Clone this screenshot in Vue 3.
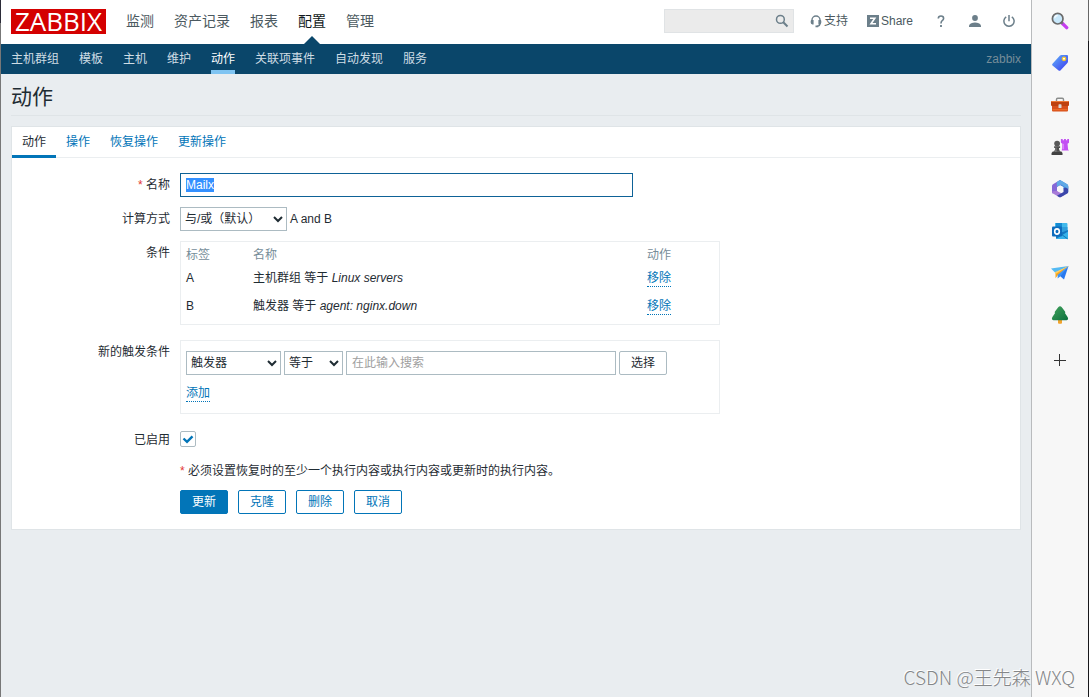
<script setup>
import { onMounted, ref } from 'vue'

const mainNav = ['监测', '资产记录', '报表', '配置', '管理']
const subNav = ['主机群组', '模板', '主机', '维护', '动作', '关联项事件', '自动发现', '服务']
const tabs = ['动作', '操作', '恢复操作', '更新操作']
const conditions = [
  { label: 'A', text: '主机群组 等于', value: 'Linux servers' },
  { label: 'B', text: '触发器 等于', value: 'agent: nginx.down' }
]
const name = ref('Mailx')
const enabled = ref(true)
const nameInput = ref(null)

onMounted(() => {
  nameInput.value.focus()
  nameInput.value.select()
})
</script>

<template>
  <div class="window">
    <div class="edge edge-left"></div>
    <div class="page">
      <header class="top">
        <a href="#" class="logo">ZABBIX</a>
        <nav class="main-nav">
          <a v-for="item in mainNav" :key="item" href="#" :class="{ active: item === '配置' }">{{ item }}</a>
        </nav>
        <div class="search">
          <input type="text" aria-label="搜索" />
          <button type="button" aria-label="搜索">
            <svg width="14" height="14" viewBox="0 0 14 14" fill="none" stroke="#6c7f8a">
              <circle cx="5.4" cy="5.4" r="3.9" stroke-width="1.5" />
              <path d="M8.3 8.3L12.5 12.5" stroke-width="2" />
            </svg>
          </button>
        </div>
        <a href="#" class="tool support">
          <svg width="12" height="14" viewBox="0 0 12 14">
            <path d="M2 8.5V6a4 4 0 0 1 8 0v3.6Q10 12 7 12.4" fill="none" stroke="#6c7f8a" stroke-width="1.4" />
            <path d="M1 6h2.600v4.600H2.400Q.6 10 .6 8zM11 6H8.400v4.600h1.200Q11.400 10 11.400 8zM5.500 11.500h2.700v1.800H5.500z" fill="#6c7f8a" />
          </svg>
          支持
        </a>
        <a href="#" class="tool share">
          <svg width="12" height="12" viewBox="0 0 12 12">
            <rect width="12" height="12" fill="#6c7f8a" />
            <path d="M3 3.200h4.800L4 8.800h5" fill="none" stroke="#fff" stroke-width="1.600" />
          </svg>
          Share
        </a>
        <a href="#" class="tool help" aria-label="帮助">
          <svg width="8" height="12" viewBox="0 0 8 12">
            <path d="M1.3 3.5Q1.4 1 4 1t2.6 2.4Q6.6 4.7 5.2 5.7 4 6.6 4 8.4" fill="none" stroke="#6c7f8a" stroke-width="1.6" />
            <rect x="3.1" y="10" width="1.8" height="2" fill="#6c7f8a" />
          </svg>
        </a>
        <a href="#" class="tool user" aria-label="用户">
          <svg width="12" height="12" viewBox="0 0 12 12" fill="#6c7f8a">
            <circle cx="6" cy="3" r="2.9" />
            <path d="M0 12v-1.6Q1.6 7.6 6 7.6t6 2.8V12z" />
          </svg>
        </a>
        <a href="#" class="tool power" aria-label="退出">
          <svg width="12" height="12" viewBox="0 0 12 12" fill="none" stroke="#6c7f8a" stroke-width="1.5">
            <path d="M3.2 1.9a5.1 5.1 0 1 0 5.6 0M6 0v6.2" />
          </svg>
        </a>
      </header>

      <nav class="sub-nav">
        <a v-for="item in subNav" :key="item" href="#" :class="{ active: item === '动作' }">{{ item }}</a>
        <span class="server">zabbix</span>
      </nav>

      <main>
        <h1>动作</h1>
        <form class="card" @submit.prevent>
          <div class="tabs" role="tablist">
            <a v-for="tab in tabs" :key="tab" href="#" role="tab" :class="{ active: tab === '动作' }">{{ tab }}</a>
          </div>
          <div class="fields">
            <label for="name"><i class="star">*</i> 名称</label>
            <div><input id="name" ref="nameInput" v-model="name" type="text" class="name" /></div>

            <label for="calc">计算方式</label>
            <div class="line">
              <select id="calc" class="calc"><option>与/或（默认）</option></select>
              <span>A and B</span>
            </div>

            <div class="label">条件</div>
            <div class="box table-box">
              <table>
                <thead>
                  <tr><th class="c-label">标签</th><th>名称</th><th class="c-action">动作</th></tr>
                </thead>
                <tbody>
                  <tr v-for="c in conditions" :key="c.label">
                    <td>{{ c.label }}</td>
                    <td>{{ c.text }} <em>{{ c.value }}</em></td>
                    <td><a href="#" class="dotted">移除</a></td>
                  </tr>
                </tbody>
              </table>
            </div>

            <label for="cond-type" class="new-label">新的触发条件</label>
            <div class="box new-box">
              <div class="line">
                <select id="cond-type" class="cond-type"><option>触发器</option></select>
                <select class="cond-op" aria-label="运算符"><option>等于</option></select>
                <input type="text" class="pattern" placeholder="在此输入搜索" aria-label="触发器" />
                <button type="button" class="btn grey">选择</button>
              </div>
              <a href="#" class="dotted">添加</a>
            </div>

            <label for="enabled" class="enabled-label">已启用</label>
            <div class="enabled">
              <input id="enabled" v-model="enabled" type="checkbox" />
              <svg v-if="enabled" class="tick" width="16" height="16" viewBox="0 0 16 16" fill="none" stroke="#0275b8" stroke-width="2.4">
                <path d="M3.500 7.500L7 10.800 12.500 5.300" />
              </svg>
            </div>

            <div class="footer">
              <p><i class="star">*</i> 必须设置恢复时的至少一个执行内容或执行内容或更新时的执行内容。</p>
              <div class="buttons">
                <button type="submit" class="btn primary">更新</button>
                <button type="button" class="btn">克隆</button>
                <button type="button" class="btn">删除</button>
                <button type="button" class="btn">取消</button>
              </div>
            </div>
          </div>
        </form>
      </main>
    </div>

    <aside class="sidebar">
      <button type="button" aria-label="Search">
        <svg width="18" height="18" viewBox="0 0 18 18">
          <path d="M11 11l4.7 4.6" stroke="#c53df0" stroke-width="3.4" stroke-linecap="round" />
          <path d="M9.8 9.8l2 2" stroke="#777" stroke-width="2" />
          <circle cx="6.7" cy="6.7" r="5.3" fill="#c8e8fb" stroke="#6b6b6b" stroke-width="1.7" />
          <path d="M3.7 6.3a3 3 0 0 1 3-2.8" fill="none" stroke="#f3fbff" stroke-width="1.3" />
        </svg>
      </button>
      <button type="button" aria-label="Shopping">
        <svg width="18" height="18" viewBox="0 0 18 18">
          <defs><linearGradient id="tag" x1="0" y1="0" x2="1" y2="1"><stop stop-color="#61b5fa" /><stop offset="1" stop-color="#3b36ee" /></linearGradient></defs>
          <path d="M9 1.5Q9.6 1 10.4 1H16q1 0 1 1v5.6q0 .8-.6 1.4l-7 7.4q-.9.9-1.8 0L1.500 11.600q-.9-.9 0-1.800z" fill="url(#tag)" />
          <circle cx="13" cy="4.8" r="1.7" fill="#fff" stroke="#f4c62d" stroke-width="1.3" />
        </svg>
      </button>
      <button type="button" aria-label="Tools">
        <svg width="18" height="18" viewBox="0 0 18 18">
          <path d="M5.500 6V3.500q0-1.200 1.200-1.200h4.600q1.200 0 1.200 1.200V6" fill="none" stroke="#8b8d8c" stroke-width="1.400" />
          <path d="M1 8h16v6.500q0 1-1 1H2q-1 0-1-1z" fill="#d8501b" />
          <path d="M1 5h16q1 0 1 1v3q0 1-1 1H1q-1 0-1-1V6q0-1 1-1z" fill="#be410e" />
          <path d="M1 5h16q.8 0 1 1H0q.2-1 1-1z" fill="#f07a35" />
          <path d="M1.500 13h15v1.300h-15z" fill="#ed6c28" />
          <rect x="7.500" y="8.300" width="3" height="3.800" rx=".6" fill="#d9dad7" />
        </svg>
      </button>
      <button type="button" aria-label="Games">
        <svg width="18" height="18" viewBox="0 0 20 18">
          <path d="M11 0h2v1.600h1.400V0h2.200v1.600H18V0h2v4.200l-1.600 1.300.6 6.200 1 1.300h-8l.7-7.500L11 4.200z" fill="#c350f3" />
          <path d="M12.500 5.500h2v6h-2z" fill="#db85fa" />
          <circle cx="6.800" cy="5.200" r="3.200" fill="#595959" />
          <path d="M3.500 8.200h6.600v1.800H8.800q0 2.500 1.700 4.300H3q1.700-1.800 1.700-4.300H3.500z" fill="#4e4e4e" />
          <path d="M2 14h9.500l1.300 1.700V18H.6v-2.300z" fill="#424242" />
          <path d="M5 9.500h1.300v5H4q1-2 1-5z" fill="#777" />
        </svg>
      </button>
      <button type="button" aria-label="Microsoft 365">
        <svg width="18" height="18" viewBox="0 0 18 18">
          <path d="M9 0l7.200 4.300q1 .7 1 1.800v6L12.500 9V7L7.300 4.200z" fill="#3e87dd" />
          <path d="M9 0L2 4.300Q1 5 1 6.100v5.800q0 1 .8 1.500L6 11V7.300L11.500 4z" fill="#8668d6" />
          <path d="M1 11.500q0 1.400 1 2L8 17q1 .6 2 0l3.400-2L6 10.700z" fill="#a77bd8" />
          <path d="M17.200 6.500v5.400q0 1-.9 1.600L10 17q-1 .6-2 0l-2-1.200 6.500-3.900V8.500z" fill="#3b47aa" />
          <path d="M9 0l7.200 4.300q1 .7 1 1.800v3L10 4.500 5.800 7.100V1.900z" fill="#60a9e5" />
          <path d="M9 5.600l3 1.700v3.500L9 12.600l-3-1.800V7.300z" fill="#f7f7f7" />
        </svg>
      </button>
      <button type="button" aria-label="Outlook">
        <svg width="18" height="18" viewBox="0 0 18 18">
          <path d="M4 1h11.500q1 0 1 1v8H4z" fill="#42b9eb" />
          <path d="M5 1h6v5H5z" fill="#168bd2" />
          <path d="M11 5h5.500v5H11z" fill="#2f9fdc" />
          <path d="M5 10h7l5-2v8q0 1-1 1H6q-1 0-1-1z" fill="#1478c0" />
          <path d="M5 17l12-7.500V16q0 1-1 1z" fill="#35b2ea" />
          <path d="M11 12.800l5.500 4" stroke="#1275b4" stroke-width="1" />
          <rect x="1" y="4.500" width="10" height="10" rx="1" fill="#0d6cbd" />
          <ellipse cx="6" cy="9.500" rx="2.300" ry="2.600" fill="none" stroke="#fff" stroke-width="1.600" />
        </svg>
      </button>
      <button type="button" aria-label="Drop">
        <svg width="18" height="18" viewBox="0 0 18 18">
          <path d="M0 4.500L17.500 2 4.500 9z" fill="#54baf3" />
          <path d="M17.500 2L13 15.500 8.400 11.500z" fill="#2878ef" />
          <path d="M17.500 2L4.500 8.800v5.500l2.300-3z" fill="#f8a71d" />
          <path d="M17.500 2L6.700 10.800v3.700l2.600-2.300z" fill="#3d91f4" />
          <path d="M17.500 2L3.800 8.300l.8 1.600z" fill="#ffd067" />
        </svg>
      </button>
      <button type="button" aria-label="Tree">
        <svg width="18" height="18" viewBox="0 0 18 18">
          <defs><linearGradient id="leaf" x1="0" y1="0" x2="1" y2="1"><stop stop-color="#43a25c" /><stop offset="1" stop-color="#0c703e" /></linearGradient></defs>
          <path d="M7 12h4v4.700q0 1-1 1H8q-1 0-1-1z" fill="#f2a32b" />
          <path d="M9 .3q1 0 1.800 1L14 5.400q.8 1.200-.1 1.600l2.700 4q1.400 2.700-1 3.300H2.400q-2.400-.6-1-3.300l2.700-4q-.9-.4-.1-1.600l3.200-4.100q.8-1 1.800-1z" fill="url(#leaf)" />
        </svg>
      </button>
      <button type="button" class="plus" aria-label="Add">
        <svg width="12" height="12" viewBox="0 0 12 12" stroke="#333" stroke-width="1"><path d="M0 6.500h12M5.500 0v12" /></svg>
      </button>
    </aside>
    <div class="edge edge-right"></div>
    <div class="watermark">CSDN @王先森 WXQ</div>
  </div>
</template>

<style>
body {
  margin: 0;
}
</style>

<style scoped>
* {
  box-sizing: border-box;
}
.window {
  position: relative;
  display: flex;
  min-height: 100vh;
  background: #e9edf0;
  color: #1f2c33;
  font: 12px/18px "Liberation Sans", Arial, "Noto Sans CJK SC", sans-serif;
}
input, select, button {
  margin: 0;
  color: inherit;
  font: inherit;
  outline: 0;
}
a {
  color: #0275b8;
  text-decoration: none;
}
.edge {
  flex: none;
  width: 1px;
}
.edge-left {
  background: linear-gradient(#2b2b38 23px, #777 23px);
}
.edge-right {
  background: linear-gradient(#666 41px, #17171b 41px);
}
.page {
  flex: 1;
  min-width: 0;
}
.top {
  display: flex;
  align-items: center;
  height: 44px;
  padding: 0 16px 2px 10px;
  background: #fff;
}
.logo {
  width: 95px;
  height: 25px;
  background: #d40000;
  color: #fff;
  font: 26px/25px "Open Sans", sans-serif;
  text-align: center;
}
.main-nav {
  display: flex;
  gap: 20px;
  margin: 0 auto 0 20px;
  font-size: 14px;
  line-height: 42px;
  white-space: nowrap;
}
.main-nav a {
  position: relative;
  color: #4b5960;
}
.main-nav .active {
  color: #101a20;
}
.main-nav .active::after {
  content: "";
  position: absolute;
  bottom: -2px;
  left: 6px;
  border: 8px solid transparent;
  border-top: 0;
  border-bottom-color: #0a466a;
}
.search {
  display: flex;
  align-items: center;
  width: 130px;
  height: 24px;
  background: #ebebeb;
  border: 1px solid #e0e3e5;
}
.search input {
  flex: 1;
  min-width: 0;
  background: none;
  border: 0;
}
.search button {
  display: flex;
  padding: 0 4px;
  background: none;
  border: 0;
}
.tool {
  display: flex;
  align-items: center;
  gap: 2px;
  color: #4b5960;
}
.support {
  margin-left: 16px;
}
.share {
  margin-left: 19px;
}
.help {
  margin-left: 24px;
}
.user {
  margin-left: 24px;
}
.power {
  margin-left: 22px;
}
.sub-nav {
  display: flex;
  gap: 20px;
  height: 30px;
  padding: 0 10px;
  background: #0a466a;
  line-height: 30px;
  white-space: nowrap;
}
.sub-nav a {
  color: #cfdde5;
}
.sub-nav .active {
  color: #fff;
  box-shadow: inset 0 -4px #7fc4f2;
}
.server {
  margin-left: auto;
  color: #768d99;
}
main {
  padding: 0 10px;
}
h1 {
  margin: 0 0 10px;
  padding-top: 4px;
  border-bottom: 1px solid #dfe4e7;
  font-size: 21px;
  font-weight: 400;
  line-height: 37px;
}
.card {
  background: #fff;
  border: 1px solid #dfe4e7;
}
.tabs {
  display: flex;
  height: 31px;
  border-bottom: 1px solid #ebeef0;
  line-height: 30px;
}
.tabs a {
  height: 31px;
  padding: 0 10px;
}
.tabs .active {
  color: #1f2c33;
  box-shadow: inset 0 -3px #0275b8;
}
.fields {
  display: grid;
  grid-template-columns: 158px minmax(0, 1fr);
  gap: 10px;
  padding: 15px 0;
}
.fields > label, .label {
  padding-top: 3px;
  text-align: right;
}
.star {
  color: #e33734;
  font-style: normal;
}
.name, .pattern, select {
  height: 24px;
  background: #fff;
  border: 1px solid #acbbc2;
}
.name, .pattern {
  padding: 0 5px;
}
.name {
  display: block;
  width: 453px;
  max-width: 100%;
}
.name:focus {
  border-color: #0e6297;
}
.name::selection {
  background: #3390ff;
  color: #fff;
}
.pattern {
  width: 270px;
}
.pattern::placeholder {
  color: #a0a0a0;
}
.line {
  display: flex;
  align-items: center;
  gap: 3px;
}
.calc {
  width: 107px;
}
.cond-type {
  width: 95px;
}
.cond-op {
  width: 59px;
}
.box {
  width: 540px;
  max-width: 100%;
  border: 1px solid #ebeef0;
}
.table-box {
  padding: 3px 5px 4px;
}
table {
  width: 100%;
  border-collapse: collapse;
  table-layout: fixed;
}
th, td {
  height: 28px;
  padding: 0;
  font-weight: 400;
  text-align: left;
}
th {
  height: 19px;
  color: #768d99;
}
.c-label {
  width: 67px;
}
.c-action {
  width: 67px;
}
.dotted {
  display: inline-block;
  border-bottom: 1px dotted #0275b8;
  line-height: 15px;
}
.new-label, .new-box {
  margin-top: 5px;
}
.new-box {
  padding: 10px 5px 11px;
}
.new-box .dotted {
  margin-top: 11px;
}
.enabled-label, .enabled {
  margin-top: 4px;
}
.enabled {
  position: relative;
  padding-top: 3px;
}
.enabled input {
  appearance: none;
  display: block;
  width: 16px;
  height: 16px;
  border: 1px solid #acbbc2;
  border-radius: 2px;
}
.tick {
  position: absolute;
  top: 3px;
  left: 0;
  pointer-events: none;
}
.footer {
  grid-column: 2;
  margin-top: 3px;
}
.footer p {
  margin: 0 0 10px;
}
.buttons {
  display: flex;
  gap: 10px;
}
.btn {
  width: 48px;
  height: 24px;
  padding: 0;
  background: #fff;
  border: 1px solid #0275b8;
  border-radius: 2px;
  color: #0275b8;
}
.grey {
  border-color: #acbbc2;
  color: #1f2c33;
}
.primary {
  background: #0275b8;
  color: #fff;
}
.sidebar {
  display: flex;
  flex: none;
  flex-direction: column;
  align-items: center;
  gap: 24px;
  width: 57px;
  padding-top: 12px;
  background: #f7f7f7;
  border-left: 1px solid #b9bbbd;
}
.sidebar button {
  display: flex;
  padding: 0;
  background: none;
  border: 0;
}
.sidebar .plus {
  margin-top: 6px;
}
.watermark {
  position: absolute;
  right: 14px;
  bottom: 6px;
  color: #858789;
  font: 300 19px/28px "Noto Sans CJK SC", sans-serif;
  text-shadow: -1px -1px #fff;
  pointer-events: none;
}
</style>
